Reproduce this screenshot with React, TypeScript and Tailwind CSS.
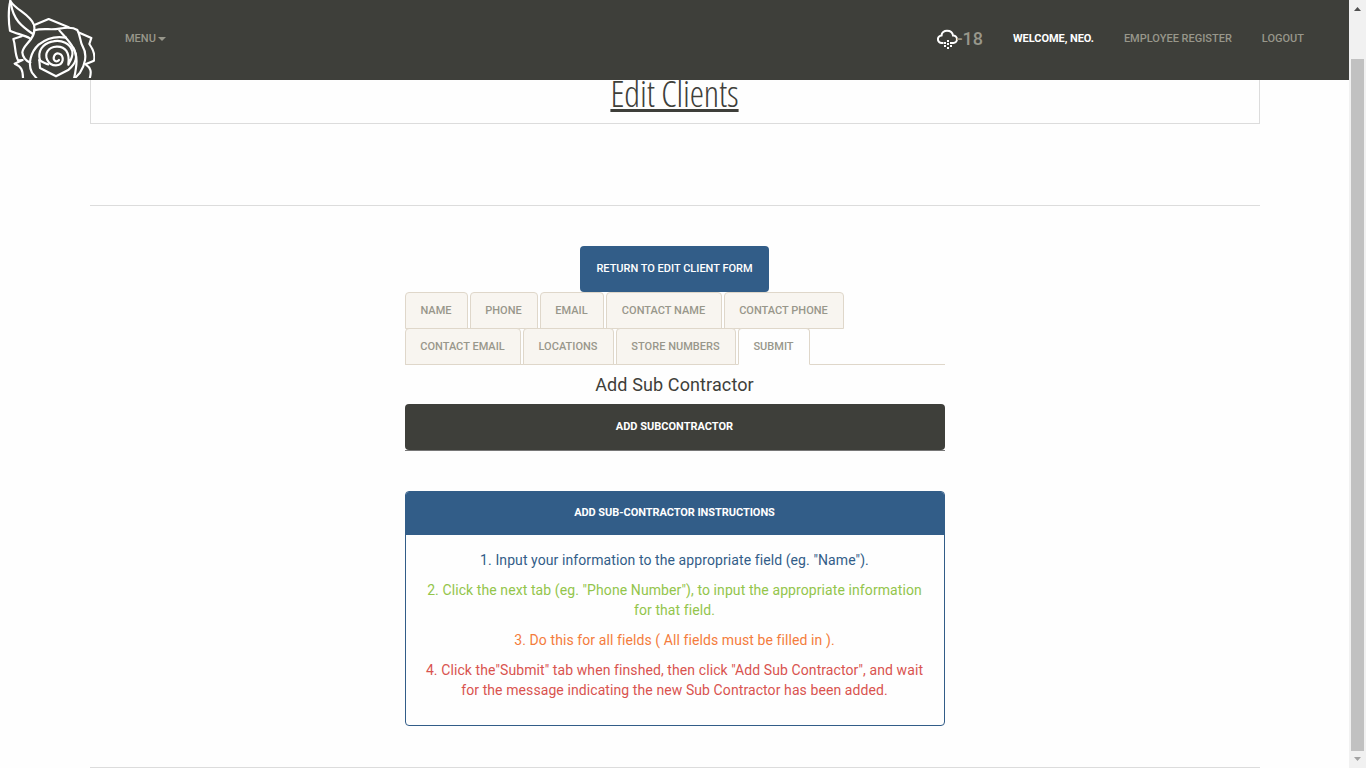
import React from "react";

const nav = "text-[11px] leading-[22px] font-medium text-[#98978b] whitespace-nowrap uppercase";

function Rose() {
  return (
    <svg width="100" height="80" viewBox="0 0 300 240" className="absolute left-0 top-0" fill="none" stroke="#fff" strokeWidth="6.5" strokeLinejoin="round" strokeLinecap="round">
      <defs><clipPath id="roseClip"><rect width="285" height="234" /></clipPath></defs>
      <g clipPath="url(#roseClip)">
        <path d="M31 3C24 30 26 72 30 92C48 101 72 105 90 115" />
        <path d="M31 3C48 31 90 42 102 75Q107 99 93 117" />
        <path d="M33 12C40 58 63 78 99 102" />
        <path d="M103 75L146 57L206 82" />
        <path d="M103 91C129 83 151 91 178 86C199 82 222 83 232 90C243 111 239 124 248 139C264 165 253 199 240 218L226 233" />
        <path d="M93 117C80 135 69 142 67 157C68 172 78 182 91 188" />
        <path d="M65 109L40 117C48 140 43 159 54 181L68 180" />
        <path d="M66 181L44 191C64 199 69 211 69 236" />
        <path d="M238 98L274 114L268 132C280 149 286 166 282 182L258 192" />
        <path d="M257 193C273 204 275 215 269 236" />
        <path d="M178 91C196 112 211 126 219 143C235 170 229 189 206 209L168 229L120 204L118 181" />
        <path d="M198 113C165 107 139 115 116 134C91 157 83 194 96 218L110 235" />
        <path d="M120 181C112 154 127 132 155 125C186 116 212 133 217 154C220 170 211 182 205 194C210 157 196 139 170 140C144 141 133 162 142 180C153 202 184 201 188 181C190 158 168 155 162 169C158 181 169 189 177 180" />
        <path d="M118 180C129 187 139 192 145 193" />
        <path d="M220 143C234 169 231 195 222 236" />
      </g>
    </svg>
  );
}

const drops = [[10, 11], [7, 13], [13, 13], [10, 14], [7, 16], [13, 16], [10, 18]];

function Weather() {
  return (
    <svg width="21" height="21" viewBox="0 0 21 21" className="mt-px -mr-[1.5px] shrink-0" fill="none" stroke="#fff" strokeWidth="2">
      <path d="M6.5 14H4.8A3.5 3.5 0 0 1 4.6 6.4C4.5 3.5 7.2 1.7 10 1.7S15.6 3.3 16 6.4A3.8 3.8 0 0 1 16.3 14H14.8" />
      {drops.map(([x, y]) => <rect key={`${x}-${y}`} x={x} y={y} width="2" height="2" fill="#fff" stroke="none" />)}
    </svg>
  );
}

function Tab({ children, w, active = false }: { children: string; w: string; active?: boolean }) {
  return (
    <li className={`${w} -mb-px mr-0.5 h-[37px] shrink-0 rounded-t-[4px] border text-center text-[11px] leading-[35px] font-medium tracking-[0.02px] whitespace-nowrap uppercase text-[#98978b] ${active ? "border-[#dfd7ca] border-b-[#fefefe] bg-[#fefefe]" : "border-[#dfd7ca] bg-[#f8f5f0]"}`}>{children}</li>
  );
}

export default function App() {
  return (
    <div className="flex h-[768px] w-[1366px] overflow-hidden bg-[#fefefe] font-['Roboto',sans-serif] text-[14px] leading-5 text-[#3e3f3a]">
      <div className="flex w-[1349px] flex-col">
        <header className="relative flex h-20 shrink-0 items-start bg-[#3e3f3a] pt-7 pl-[125px]">
          <Rose />
          <span className={nav}>Menu</span>
          <svg width="8" height="4" viewBox="0 0 8 4" className="mt-[9px] ml-0.5"><path d="M0 0H8L4 4Z" fill="#98978b" /></svg>
          <div className="ml-auto flex pr-[45px]">
            <Weather />
            <span className="mr-[30px] text-[18px] leading-[22px] font-medium text-[#98978b]">-18</span>
            <span className="mr-[30px] text-[11px] leading-[22px] font-bold tracking-[-0.05px] whitespace-nowrap text-white uppercase">Welcome, Neo.</span>
            <span className={`${nav} mr-[30px]`}>Employee Register</span>
            <span className={nav}>Logout</span>
          </div>
        </header>
        <main className="mx-auto flex w-[1170px] flex-col items-center">
          <div className="h-11 w-full border-x border-b border-[#dcdcdc] text-center">
            <h1 className="-mt-1.5 font-['Open_Sans',sans-serif] text-[36px] leading-[40px] font-light tracking-[-0.12px] underline [font-stretch:75%]">Edit Clients</h1>
          </div>
          <hr className="mt-[81px] w-full border-[#dcdcdc]" />
          <button className="mt-10 h-[46px] w-[189px] rounded-[4px] bg-[#325d88] text-[11px] font-medium whitespace-nowrap text-white uppercase">Return to Edit Client Form</button>
          <section className="w-[540px] text-center">
            <ul className="flex">
              <Tab w="w-[63px]">Name</Tab>
              <Tab w="w-[68px]">Phone</Tab>
              <Tab w="w-[64px]">Email</Tab>
              <Tab w="w-[116px]">Contact Name</Tab>
              <Tab w="w-[120px]">Contact Phone</Tab>
            </ul>
            <ul className="flex border-b border-[#dfd7ca]">
              <Tab w="w-[116px]">Contact Email</Tab>
              <Tab w="w-[91px]">Locations</Tab>
              <Tab w="w-[120px]">Store Numbers</Tab>
              <Tab w="w-[72px]" active>Submit</Tab>
            </ul>
            <h4 className="h-[39px] text-[18px] leading-[39px] font-normal tracking-[0.12px]">Add Sub Contractor</h4>
            <div className="border-b border-[#777]">
              <button className="block h-[46px] w-full rounded-[4px] bg-[#3e3f3a] text-[11px] font-bold text-white uppercase">Add Subcontractor</button>
            </div>
            <div className="mt-10 h-[235px] overflow-hidden rounded-[4px] border border-[#325d88]">
              <h3 className="h-[43px] bg-[#325d88] text-[11px] leading-[41px] font-bold tracking-[-0.06px] text-white uppercase">Add Sub-Contractor Instructions</h3>
              <div className="flex flex-col gap-2.5 px-[15px] pt-[15px] tracking-[0.09px] whitespace-nowrap">
                <p className="text-[#325d88]">1. Input your information to the appropriate field (eg. "Name").</p>
                <p className="text-[#93c54b]">2. Click the next tab (eg. "Phone Number"), to input the appropriate information<br />for that field.</p>
                <p className="text-[#f47c3c]">3. Do this for all fields ( All fields must be filled in ).</p>
                <p className="text-[#d9534f]">4. Click the"Submit" tab when finshed, then click "Add Sub Contractor", and wait<br />for the message indicating the new Sub Contractor has been added.</p>
              </div>
            </div>
          </section>
          <hr className="mt-[41px] w-full border-[#dcdcdc]" />
        </main>
      </div>
      <aside className="flex w-[17px] flex-col items-center bg-[#f1f1f1]">
        <svg width="17" height="59" viewBox="0 0 17 59"><path d="M5 11H12L8.5 7Z" fill="#505050" /></svg>
        <div className="h-[692px] w-[13px] bg-[#c1c1c1]" />
        <svg width="17" height="17" viewBox="0 0 17 17"><path d="M5 6H12L8.5 10Z" fill="#a3a3a3" /></svg>
      </aside>
    </div>
  );
}
